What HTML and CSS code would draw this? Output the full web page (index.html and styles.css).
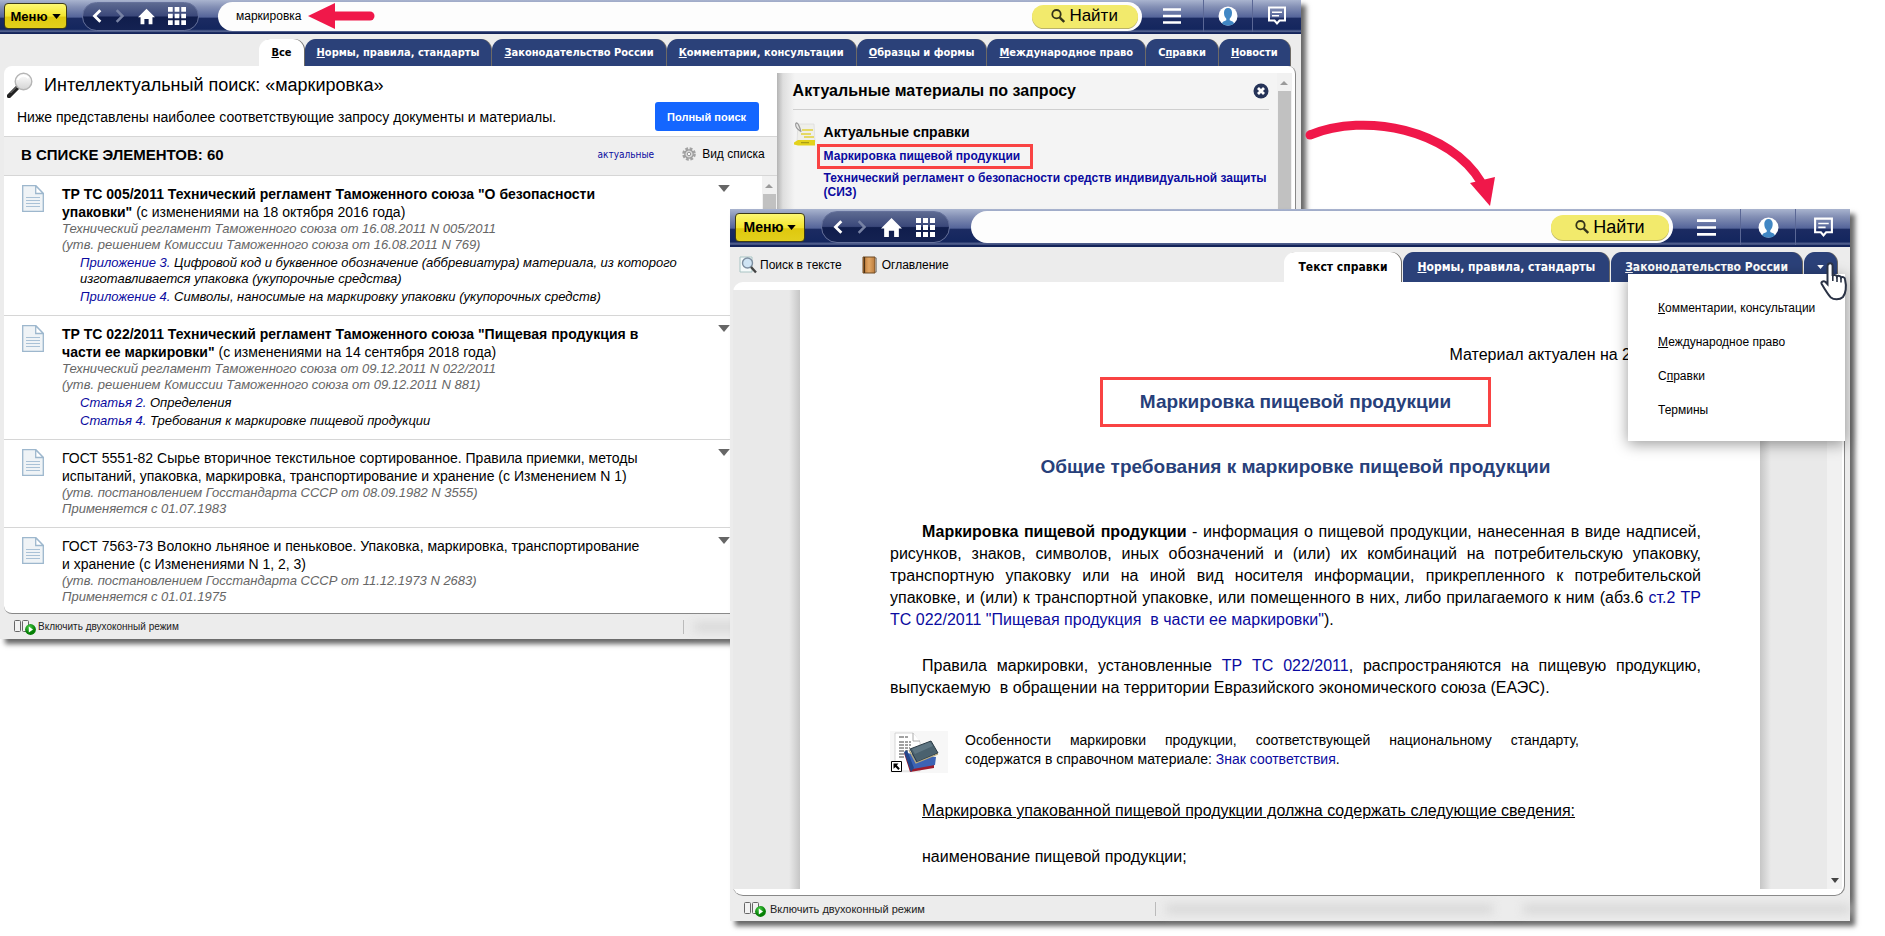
FILE: index.html
```html
<!DOCTYPE html>
<html lang="ru">
<head>
<meta charset="utf-8">
<title>Интеллектуальный поиск</title>
<link rel="stylesheet" href="styles.css">
</head>
<body>
<svg class="sprite" aria-hidden="true">
  <defs>
    <linearGradient id="lens" x1="0" y1="0" x2="0" y2="1"><stop offset="0" stop-color="#fff"/><stop offset="1" stop-color="#d4d4d4"/></linearGradient>
    <linearGradient id="leather" x1="0" y1="0" x2="1" y2="0"><stop offset="0" stop-color="#b97434"/><stop offset="0.5" stop-color="#e2a765"/><stop offset="1" stop-color="#b97a3c"/></linearGradient>
    <radialGradient id="play" cx="0.4" cy="0.3"><stop offset="0" stop-color="#4ad04a"/><stop offset="1" stop-color="#068006"/></radialGradient>
  </defs>
  <symbol id="i-back" viewBox="0 0 12 18"><path d="M10 2 3 9l7 7" fill="none" stroke="currentColor" stroke-width="3.4"/></symbol>
  <symbol id="i-fwd" viewBox="0 0 12 18"><path d="m2 2 7 7-7 7" fill="none" stroke="currentColor" stroke-width="3"/></symbol>
  <symbol id="i-home" viewBox="0 0 20 18"><path d="M10 0 20 10h-3v8h-4.500v-6h-5v6H3v-8H0z" fill="currentColor"/></symbol>
  <symbol id="i-grid" viewBox="0 0 19 19"><path d="M0 0h5v5H0zm7 0h5v5H7zm7 0h5v5h-5zM0 7h5v5H0zm7 0h5v5H7zm7 0h5v5h-5zM0 14h5v5H0zm7 0h5v5H7zm7 0h5v5h-5z" fill="currentColor"/></symbol>
  <symbol id="i-find" viewBox="0 0 14 14"><circle cx="5.500" cy="5.200" r="4.200" fill="none" stroke="#33331a" stroke-width="1.800"/><path d="m8.800 8.600 4.400 4.400" stroke="#33331a" stroke-width="2.400"/></symbol>
  <symbol id="i-list" viewBox="0 0 18 16"><path d="M0 1.500h18M0 8h18M0 14.500h18" stroke="#fff" stroke-width="2.600"/></symbol>
  <symbol id="i-user" viewBox="0 0 20 20"><circle cx="10" cy="10" r="9.500" fill="#fff"/><path d="M4 17.500c.5-2.200 2-2.300 4.300-3.300v-1.500C6.500 11 6 9 6 6.500 6 4 7.500 2 10 2s4 2 4 4.500c0 2.500-.5 4.500-2.300 6.200v1.500c2.300 1 3.800 1.100 4.300 3.300-2 1.600-3.500 2-6 2s-4-.4-6-2z" fill="#4187c4"/></symbol>
  <symbol id="i-chat" viewBox="0 0 20 20"><path d="M2 1.500h16v13h-5.500L10 17.500l-2.500-3H2z" fill="none" stroke="#fff" stroke-width="2"/><path d="M5 6.200h10M5 9.800h7" stroke="#fff" stroke-width="1.600"/></symbol>
  <symbol id="i-doc" viewBox="0 0 22 27"><path d="M.7.700h13l7.600 7.800v17.800H.7z" fill="#eff3f6" stroke="#9db7cd" stroke-width="1.300"/><path d="M13.700.700v7.800h7.600z" fill="#fff" stroke="#9db7cd" stroke-width="1.300"/><path d="M4 12.500h14M4 15.500h14M4 18.500h14M4 21.500h14" stroke="#a9c1d6" stroke-width="1.200"/></symbol>
  <symbol id="i-down" viewBox="0 0 10 6"><path d="M0 0h10L5 6z" fill="currentColor"/></symbol>
  <symbol id="i-up" viewBox="0 0 8 4"><path d="M0 4h8L4 0z" fill="#9a9a9a"/></symbol>
  <symbol id="i-panes" viewBox="0 0 22 16"><rect x=".5" y="1.500" width="6" height="11" rx="1" fill="#f2f2f2" stroke="#666"/><rect x="8.500" y="1.500" width="6" height="11" rx="1" fill="#f2f2f2" stroke="#666"/><circle cx="16.500" cy="10.500" r="5.400" fill="url(#play)"/><path d="m14.800 7.500 4.200 3-4.200 3z" fill="#fff"/></symbol>
</svg>

<main class="desktop">
  <section class="window window-search" aria-label="Результаты поиска">
    <header class="topbar">
      <button class="menu-btn" type="button">Меню <svg><use href="#i-down"/></svg></button>
      <nav class="pill" aria-label="Навигация">
        <button type="button" aria-label="Назад"><svg class="ic-arrow"><use href="#i-back"/></svg></button>
        <button type="button" class="dim" aria-label="Вперёд"><svg class="ic-arrow"><use href="#i-fwd"/></svg></button>
        <button type="button" aria-label="Домой"><svg class="ic-home"><use href="#i-home"/></svg></button>
        <button type="button" aria-label="Разделы"><svg class="ic-grid"><use href="#i-grid"/></svg></button>
      </nav>
      <form class="search">
        <input type="text" value="маркировка" aria-label="Строка поиска">
        <button class="find-btn" type="button"><svg><use href="#i-find"/></svg>Найти</button>
      </form>
      <div class="tools">
        <button type="button" aria-label="Список"><svg class="ic-list"><use href="#i-list"/></svg></button>
        <button type="button" aria-label="Профиль"><svg class="ic-user"><use href="#i-user"/></svg></button>
        <button type="button" aria-label="Сообщения"><svg class="ic-chat"><use href="#i-chat"/></svg></button>
      </div>
    </header>

    <nav class="tabs">
      <a class="tab active" href="#"><u>В</u>се</a>
      <a class="tab" href="#"><u>Н</u>ормы, правила, стандарты</a>
      <a class="tab" href="#"><u>З</u>аконодательство России</a>
      <a class="tab" href="#"><u>К</u>омментарии, консультации</a>
      <a class="tab" href="#"><u>О</u>бразцы и формы</a>
      <a class="tab" href="#"><u>М</u>еждународное право</a>
      <a class="tab" href="#">С<u>п</u>равки</a>
      <a class="tab" href="#"><u>Н</u>овости</a>
    </nav>

    <div class="panel">
      <div class="results">
        <div class="intro">
          <h1><svg class="ic-lens" viewBox="0 0 26 26"><path d="m2 24 8-8" stroke="#222" stroke-width="4.500" stroke-linecap="round"/><path d="m3.500 21 6-6" stroke="#888" stroke-width="1"/><circle cx="16.500" cy="9.500" r="8.300" fill="url(#lens)" stroke="#b5b5b5" stroke-width="1.400"/><path d="M10.500 8a6.500 6.500 0 0 1 11-2" fill="none" stroke="#fff" stroke-width="2"/></svg>Интеллектуальный поиск: «маркировка»</h1>
          <div class="intro-row">
            <p>Ниже представлены наиболее соответствующие запросу документы и материалы.</p>
            <button class="full-btn" type="button">Полный поиск</button>
          </div>
        </div>
        <div class="list-head">
          <h2>В СПИСКЕ ЭЛЕМЕНТОВ: 60</h2>
          <a class="actual" href="#">актуальные</a>
          <button class="view-btn" type="button"><svg viewBox="0 0 14 14"><circle cx="7" cy="7" r="5.600" fill="none" stroke="#a2a2a2" stroke-width="2.400" stroke-dasharray="2.800 1.600"/><circle cx="7" cy="7" r="4.200" fill="#d9d9d9" stroke="#999" stroke-width="1.200"/><circle cx="7" cy="7" r="1.700" fill="#fafafa" stroke="#999"/></svg>Вид списка</button>
        </div>
        <div class="list-wrap">
          <div class="list">
            <article class="item">
              <svg class="ic-doc"><use href="#i-doc"/></svg>
              <div class="item-body">
                <h3><b>ТР ТС 005/2011 Технический регламент Таможенного союза "О безопасности упаковки"</b> (с изменениями на 18 октября 2016 года)</h3>
                <p class="meta">Технический регламент Таможенного союза от 16.08.2011 N 005/2011<br>(утв. решением Комиссии Таможенного союза от 16.08.2011 N 769)</p>
                <p class="part"><a href="#">Приложение 3.</a> Цифровой код и буквенное обозначение (аббревиатура) материала, из которого изготавливается упаковка (укупорочные средства)</p>
                <p class="part"><a href="#">Приложение 4.</a> Символы, наносимые на маркировку упаковки (укупорочных средств)</p>
              </div>
              <button class="more" type="button" aria-label="Действия"><svg><use href="#i-down"/></svg></button>
            </article>
            <article class="item">
              <svg class="ic-doc"><use href="#i-doc"/></svg>
              <div class="item-body">
                <h3><b>ТР ТС 022/2011 Технический регламент Таможенного союза "Пищевая продукция в части ее маркировки"</b> (с изменениями на 14 сентября 2018 года)</h3>
                <p class="meta">Технический регламент Таможенного союза от 09.12.2011 N 022/2011<br>(утв. решением Комиссии Таможенного союза от 09.12.2011 N 881)</p>
                <p class="part"><a href="#">Статья 2.</a> Определения</p>
                <p class="part"><a href="#">Статья 4.</a> Требования к маркировке пищевой продукции</p>
              </div>
              <button class="more" type="button" aria-label="Действия"><svg><use href="#i-down"/></svg></button>
            </article>
            <article class="item">
              <svg class="ic-doc"><use href="#i-doc"/></svg>
              <div class="item-body">
                <h3>ГОСТ 5551-82 Сырье вторичное текстильное сортированное. Правила приемки, методы испытаний, упаковка, маркировка, транспортирование и хранение (с Изменением N 1)</h3>
                <p class="meta">(утв. постановлением Госстандарта СССР от 08.09.1982 N 3555)<br>Применяется с 01.07.1983</p>
              </div>
              <button class="more" type="button" aria-label="Действия"><svg><use href="#i-down"/></svg></button>
            </article>
            <article class="item">
              <svg class="ic-doc"><use href="#i-doc"/></svg>
              <div class="item-body">
                <h3>ГОСТ 7563-73 Волокно льняное и пеньковое. Упаковка, маркировка, транспортирование и&nbsp;хранение (с Изменениями N 1, 2, 3)</h3>
                <p class="meta">(утв. постановлением Госстандарта СССР от 11.12.1973 N 2683)<br>Применяется с 01.01.1975</p>
              </div>
              <button class="more" type="button" aria-label="Действия"><svg><use href="#i-down"/></svg></button>
            </article>
          </div>
          <div class="scroll"><svg><use href="#i-up"/></svg><span class="thumb"></span></div>
        </div>
      </div>
      <aside class="side">
        <div class="side-body">
          <div class="side-head">
            <h2>Актуальные материалы по запросу</h2>
            <button type="button" aria-label="Закрыть"><svg viewBox="0 0 16 16"><circle cx="8" cy="8" r="7.500" fill="#253358"/><path d="m5 5 6 6m0-6-6 6" stroke="#fff" stroke-width="2.800"/></svg></button>
          </div>
          <div class="side-group">
            <svg class="ic-note" viewBox="0 0 24 26"><path d="M5 2h16l1 18H4z" fill="#efefea" stroke="#ddd" stroke-width=".8"/><path d="M9 8h11M8 12h10M11 15h10" stroke="#e2d23a" stroke-width="1.600"/><path d="M3 1c2-1 4 5 5 9M3 1c-1 3 1 6 4 8" fill="none" stroke="#999" stroke-width="1.200"/><path d="M1 20.500 5 18h17v5.500H5L1 22.500z" fill="#e3d21c"/><path d="M8 20.700h8" stroke="#9a8f14"/></svg>
            <div>
              <h3>Актуальные справки</h3>
              <a class="marked" href="#">Маркировка пищевой продукции</a>
              <a href="#">Технический регламент о безопасности средств индивидуальной защиты (СИЗ)</a>
            </div>
          </div>
        </div>
        <div class="scroll"><svg><use href="#i-up"/></svg><span class="thumb"></span></div>
      </aside>
    </div>

    <footer class="status">
      <button type="button"><svg><use href="#i-panes"/></svg>Включить двухоконный режим</button>
      <span class="haze"><i></i></span>
    </footer>
  </section>

  <svg class="arrow-left" viewBox="0 0 68 28" aria-hidden="true"><path d="M25 14h37" stroke="#f0184a" stroke-width="9" stroke-linecap="round"/><path d="M0 14 27 1v26z" fill="#f0184a"/></svg>
  <svg class="arrow-curve" viewBox="0 0 194 90" aria-hidden="true"><path d="M6 15C62-8 146 10 177 62" fill="none" stroke="#f0184a" stroke-width="9"/><circle cx="6" cy="15" r="4.500" fill="#f0184a"/><path d="M166 63 191 57l-5 29z" fill="#f0184a"/></svg>

  <section class="window window-doc" aria-label="Документ">
    <header class="topbar">
      <button class="menu-btn" type="button">Меню <svg><use href="#i-down"/></svg></button>
      <nav class="pill" aria-label="Навигация">
        <button type="button" aria-label="Назад"><svg class="ic-arrow"><use href="#i-back"/></svg></button>
        <button type="button" class="dim" aria-label="Вперёд"><svg class="ic-arrow"><use href="#i-fwd"/></svg></button>
        <button type="button" aria-label="Домой"><svg class="ic-home"><use href="#i-home"/></svg></button>
        <button type="button" aria-label="Разделы"><svg class="ic-grid"><use href="#i-grid"/></svg></button>
      </nav>
      <form class="search">
        <input type="text" aria-label="Строка поиска">
        <button class="find-btn" type="button"><svg><use href="#i-find"/></svg>Найти</button>
      </form>
      <div class="tools">
        <button type="button" aria-label="Список"><svg class="ic-list"><use href="#i-list"/></svg></button>
        <button type="button" aria-label="Профиль"><svg class="ic-user"><use href="#i-user"/></svg></button>
        <button type="button" aria-label="Сообщения"><svg class="ic-chat"><use href="#i-chat"/></svg></button>
      </div>
    </header>

    <div class="doc-bar">
      <button class="tool" type="button"><svg viewBox="0 0 18 18"><path d="M1 1h12v15H1z" fill="#f5fafa" stroke="#a9c4c4"/><circle cx="8.500" cy="7" r="5" fill="#cfe4f4" stroke="#7d8ea0" stroke-width="1.400"/><path d="m12 11 5 5.500" stroke="#444" stroke-width="2.400"/></svg>Поиск в тексте</button>
      <button class="tool" type="button"><svg viewBox="0 0 16 18"><path d="M12 2h2.500v14H12z" fill="#e8e8e8" stroke="#888" stroke-width=".8"/><path d="M1 1h12v16H1z" fill="url(#leather)" stroke="#6e4a24"/><path d="M2.500 1v16" stroke="#4e3314" stroke-width="1.200"/></svg>Оглавление</button>
      <nav class="tabs">
        <a class="tab active" href="#">Текст справки</a>
        <a class="tab" href="#"><u>Н</u>ормы, правила, стандарты</a>
        <a class="tab" href="#"><u>З</u>аконодательство России</a>
        <button class="tab tab-more" type="button" aria-label="Ещё"><svg><use href="#i-down"/></svg></button>
      </nav>
      <div class="popup">
        <a href="#"><u>К</u>омментарии, консультации</a>
        <a href="#"><u>М</u>еждународное право</a>
        <a href="#">С<u>п</u>равки</a>
        <a href="#">Термины</a>
      </div>
      <svg class="hand" viewBox="0 0 30 40" aria-hidden="true"><path d="M10 2.500c2-.8 3.600.3 3.600 2.500v10c.5-1.600 3.900-1.500 4.300.6.900-1.300 3.900-.9 4.200 1 1-1 3.600-.7 3.900 1.600.7 3 1.200 6.500.7 10.400-.3 3-1.200 5-2.700 7.300-3.500 3.200-9 3.200-12.500.3-3-3.400-5.500-7.600-8.800-13.200-1-2 1.600-3.700 3.600-2.200l2.200 2.400V5c0-1.200.5-2 1.500-2.500z" fill="#fff" stroke="#2a3245" stroke-width="2"/><path d="M13.800 14v6M18 15.500V21M22 17v4.500" stroke="#2a3245" stroke-width="1.600"/></svg>
    </div>

    <div class="doc-area">
      <article class="page">
        <p class="fresh">Материал актуален на 2</p>
        <h1>Маркировка пищевой продукции</h1>
        <h2>Общие требования к маркировке пищевой продукции</h2>
        <p class="para"><b>Маркировка пищевой продукции</b> - информация о пищевой продукции, нанесенная в виде надписей, рисунков, знаков, символов, иных обозначений и (или) их комбинаций на потребительскую упаковку, транспортную упаковку или на иной вид носителя информации, прикрепленного к потребительской упаковке, и (или) к транспортной упаковке, или помещенного в них, либо прилагаемого к ним (абз.6 <a href="#">ст.2 ТР ТС 022/2011 "Пищевая продукция&nbsp; в части ее маркировки"</a>).</p>
        <p class="para">Правила маркировки, установленные <a href="#">ТР ТС 022/2011</a>, распространяются на пищевую продукцию, выпускаемую&nbsp; в обращении на территории Евразийского экономического союза (ЕАЭС).</p>
        <div class="note">
          <svg viewBox="0 0 58 42"><path d="M0 0h58v42H0z" fill="#f7f7f7"/><path d="M5 2h18l7 9v29H5z" fill="#fff" stroke="#ccc" stroke-width=".8"/><path d="M23 2v8h7" fill="#fff" stroke="#aaa"/><path d="M9 6h9M9 11h12M9 14h12M9 17h11M9 20h9M9 23h8M9 26h6" stroke="#444" stroke-dasharray="5 1 3 1"/><path d="m14 22 6 19 24-4v-6z" fill="#9c1c2c"/><path d="m16 22 7 16 22-4 1-8z" fill="#3c63b4"/><path d="m14 21 3-2 7 18-3 4z" fill="#24468a"/><path d="m20 18 21-8 7 12-21 9z" fill="#4a616e" stroke="#2c3b45"/><path d="m19 19 7 13 22-9" fill="none" stroke="#b8ab7b" stroke-width="1.300"/><path d="m22 18 18-7 3 4-18 8z" fill="#5f7683"/><path d="M1.500 30.500h10v10h-10z" fill="#fff" stroke="#000"/><path d="M3.500 32.500h5l-1.700 1.700 3 3.300-1.500 1.500-2.800-3-2 1.800z" fill="#000"/></svg>
          <p>Особенности маркировки продукции, соответствующей национальному стандарту, содержатся в справочном материале: <a href="#">Знак соответствия</a>.</p>
        </div>
        <p class="para"><span class="lined">Маркировка упакованной пищевой продукции должна содержать следующие сведения:</span></p>
        <p class="para">наименование пищевой продукции;</p>
      </article>
      <div class="scroll"><svg><use href="#i-down"/></svg></div>
    </div>

    <footer class="status">
      <button type="button"><svg><use href="#i-panes"/></svg>Включить двухоконный режим</button>
      <span class="haze"><i></i><i></i></span>
    </footer>
  </section>
</main>
</body>
</html>
```

FILE: styles.css
```css
* { box-sizing: border-box; }

body {
  margin: 0;
  background: #fff;
  color: #000;
  font-family: "Liberation Sans", Arial, sans-serif;
}

h1, h2, h3, p { margin: 0; }
a { color: #0a0aa0; text-decoration: none; }

button {
  margin: 0;
  padding: 0;
  border: 0;
  background: none;
  color: inherit;
  font: inherit;
}

svg { display: block; flex: none; }
.sprite { position: absolute; width: 0; height: 0; }

.desktop {
  position: relative;
  min-height: 100vh;
  overflow: hidden;
}

.window {
  position: absolute;
  background: #ececec;
  box-shadow: 5px 5px 5px rgba(0, 0, 0, .6);
}

.window-search { left: 0; top: 0; width: 69%; }
.window-doc { left: 730px; right: 35px; top: 209px; }

/* Top bar */
.topbar {
  display: flex;
  align-items: center;
  height: 34px;
  padding: 0 0 2px 4px;
  background: linear-gradient(#a9b4cf 0, #8490b5 20%, #55659a 50%, #1b2b62 54%, #14265e 86%, #5c6a96 92%, #14245a 96%);
}

.menu-btn {
  display: flex;
  align-items: center;
  justify-content: center;
  gap: 4px;
  width: 63px;
  height: 26px;
  border: 1px solid #3d3a16;
  border-radius: 4px;
  background: linear-gradient(#fdf873, #f3e52f 50%, #dfc80e 55%, #e2cf1c);
  font-size: 13px;
  font-weight: bold;
}
.menu-btn svg { width: 9px; height: 5px; }

.pill {
  display: flex;
  align-items: center;
  height: 29px;
  margin-left: 15px;
  padding: 0 12px 0 9px;
  gap: 13px;
  border: 1px solid #65719b;
  border-radius: 15px;
  background: linear-gradient(#5d6a91, #3b487a 48%, #101d4c 52%, #142252);
  color: #fff;
}
.pill .dim { color: #7782a4; }
.ic-arrow { width: 10px; height: 16px; }
.ic-home { width: 17px; height: 17px; }
.ic-grid { width: 18px; height: 18px; }

.search {
  display: flex;
  flex: 1;
  align-items: center;
  height: 29px;
  margin-left: 19px;
  padding: 0 4px 0 18px;
  border-radius: 15px;
  background: #fdfdfd;
}
.search input {
  flex: 1;
  min-width: 0;
  padding: 0;
  border: 0;
  outline: 0;
  background: none;
  font: 12px "Liberation Sans", Arial, sans-serif;
}
.find-btn {
  display: flex;
  align-items: center;
  justify-content: center;
  gap: 4px;
  width: 106px;
  height: 23px;
  border-radius: 12px;
  background: #f2ea6c;
  box-shadow: 0 1px 0 #b9b26a;
  font-size: 17px;
}
.find-btn svg { width: 14px; height: 14px; }

.tools { display: flex; }
.tools button {
  display: flex;
  align-items: center;
  justify-content: center;
  width: 49px;
  height: 32px;
}
.tools button:first-child { width: 61px; }
.tools button + button { border-left: 1px solid #5a6795; }
.ic-list { width: 18px; height: 16px; }
.ic-user, .ic-chat { width: 20px; height: 20px; }

/* Tabs */
.tabs {
  display: flex;
  justify-content: flex-end;
  gap: 2px;
  font: bold 11px "DejaVu Sans Condensed", "DejaVu Sans", sans-serif;
}
.window-search .tabs { gap: 1px; padding: 5px 11px 0 0; }
.tab {
  display: flex;
  align-items: center;
  height: 27px;
  padding: 0 12px;
  border-radius: 11px 11px 0 0;
  background: #2b4179;
  box-shadow: 1px 0 0 #6d6a66;
  color: #fff;
  white-space: nowrap;
}
.tab.active { background: #fff; color: #000; }

/* Search results */
.panel {
  display: flex;
  margin: 0 5px 0 4px;
  padding-right: 3px;
  border-right: 1px solid #888;
  border-bottom: 1px solid #888;
  border-radius: 8px;
  background: #fff;
}
.results { flex: 3 1 0; min-width: 0; }
.intro { height: 70px; padding: 7px 18px 0 13px; }
.intro h1 {
  display: flex;
  align-items: center;
  gap: 11px;
  height: 24px;
  margin-left: -10px;
  font-size: 18px;
  font-weight: normal;
}
.ic-lens { width: 26px; height: 26px; }
.intro-row { display: flex; align-items: center; justify-content: space-between; margin-top: 5px; }
.intro-row p { font-size: 14px; }
.full-btn {
  width: 104px;
  height: 29px;
  border-radius: 3px;
  background: #1466ff;
  color: #fff;
  font-size: 11px;
  font-weight: bold;
}
.list-head {
  display: flex;
  align-items: center;
  height: 40px;
  padding: 0 12px 4px 17px;
  border: solid #d6d6d6;
  border-width: 1px 0;
  background: #efefef;
}
.list-head h2 { flex: 1; font-size: 15px; }
.actual { font: 10px "DejaVu Sans Condensed", "DejaVu Sans", sans-serif; }
.view-btn { display: flex; align-items: center; gap: 6px; margin-left: 28px; font-size: 12px; }
.view-btn svg { width: 14px; height: 14px; }

.list-wrap { display: flex; }
.list { flex: 1; min-width: 0; }
.item {
  display: flex;
  align-items: flex-start;
  padding: 9px 32px 10px 18px;
  border-bottom: 1px solid #d6d6d6;
}
.item:last-child { padding-bottom: 8px; border-bottom: 0; }
.ic-doc { width: 22px; height: 27px; margin-right: 18px; }
.item-body { flex: 1; min-width: 0; padding-right: 32px; }
.item h3 { padding-right: 24px; font-size: 14px; line-height: 18px; font-weight: normal; }
.meta { color: #666; font-size: 13px; line-height: 16px; font-style: italic; }
.part { margin-top: 2px; padding-left: 18px; font-size: 13px; line-height: 16px; font-style: italic; }
.more { color: #666; }
.more svg { width: 12px; height: 7px; }

.scroll {
  display: flex;
  flex-direction: column;
  align-items: center;
  width: 15px;
  padding-top: 8px;
  background: #f1f1f1;
}
.scroll svg { width: 8px; height: 4px; }
.thumb { flex: 1; width: 13px; margin-top: 6px; background: #c1c1c1; }

/* Side panel */
.side {
  display: flex;
  flex: 2 1 0;
  min-width: 0;
  margin-top: 7px;
  background: linear-gradient(to right, #b4b4b4, #dedede 6px, #f4f4f4 18px);
}
.side-body { flex: 1; padding: 0 8px 0 16px; }
.side-head {
  display: flex;
  align-items: center;
  justify-content: space-between;
  height: 37px;
  border-bottom: 1px solid #cfcfcf;
}
.side-head h2 { font-size: 16px; }
.side-head svg { width: 16px; height: 16px; }
.side-group { display: flex; margin-top: 12px; gap: 7px; }
.ic-note { width: 24px; height: 26px; }
.side-group h3 { font-size: 14px; line-height: 20px; }
.side-group a { display: block; font-size: 12px; line-height: 14px; font-weight: bold; }
.side-group a.marked {
  width: fit-content;
  margin: 2px 0 2px -7px;
  padding: 3px 10px 4px 4px;
  border: 3px solid #f94343;
  line-height: 12px;
}

/* Callout arrows over the windows */
.arrow-left { position: absolute; left: 308px; top: 2px; width: 68px; height: 28px; }
.arrow-curve { position: absolute; left: 1304px; top: 120px; width: 194px; height: 90px; }

/* Status bar */
.status { display: flex; align-items: center; height: 25px; padding-left: 14px; font-size: 11px; color: #222; }
.status button { display: flex; align-items: center; gap: 4px; }
.status svg { width: 22px; height: 16px; }
.haze { display: flex; gap: 30px; height: 14px; border-left: 1px solid #bbb; padding: 2px 0 0 10px; }
.haze i { flex: 1; height: 10px; background: #d9d9d9; filter: blur(5px); }
.window-search .status { justify-content: space-between; font-size: 10px; }
.window-search .status button { gap: 2px; }
.window-search .haze { width: 48%; padding-right: 20px; }

/* Document window */
.window-doc .topbar { height: 38px; padding-left: 5px; }
.window-doc .menu-btn { width: 70px; height: 29px; font-size: 14px; }
.window-doc .pill { height: 32px; margin-left: 16px; padding: 0 14px 0 11px; gap: 14px; border-radius: 16px; }
.window-doc .ic-home { width: 21px; height: 19px; }
.window-doc .ic-grid { width: 19px; height: 19px; }
.window-doc .search { height: 32px; margin-left: 21px; border-radius: 16px; }
.window-doc .find-btn { width: 118px; height: 25px; font-size: 18px; }
.window-doc .tools button { width: 55px; height: 36px; }
.window-doc .tools button:first-child { width: 67px; }
.window-doc .ic-list { width: 19px; height: 17px; }
.window-doc .ic-user, .window-doc .ic-chat { width: 21px; height: 21px; }

.doc-bar { position: relative; display: flex; align-items: center; height: 35px; padding-left: 9px; }
.tool { display: flex; align-items: center; gap: 3px; margin-right: 19px; font-size: 12px; }
.tool svg { width: 18px; height: 18px; }
.doc-bar .tabs { flex: 1; align-self: flex-end; padding-right: 13px; font-size: 12px; }
.doc-bar .tab { height: 30px; padding: 0 14px; }
.doc-bar .tab-more { padding: 0 13px; }
.tab-more svg { width: 7px; height: 4px; }

.popup {
  position: absolute;
  top: 27px;
  right: 5px;
  z-index: 1;
  display: flex;
  flex-direction: column;
  width: 217px;
  padding: 17px 0 14px 30px;
  background: #fff;
  box-shadow: 0 3px 14px rgba(0, 0, 0, .4);
}
.popup a { color: #000; font-size: 12px; line-height: 34px; }
.hand { position: absolute; top: 14px; right: 1px; z-index: 2; width: 30px; height: 40px; }

.doc-area {
  display: flex;
  margin: 0 5px 0 3px;
  padding: 8px 2px 6px 0;
  border-right: 1px solid #888;
  border-bottom: 1px solid #888;
  border-radius: 10px;
  background: #fff;
}
.page {
  flex: 1;
  padding: 54px 59px 21px 90px;
  border: solid transparent;
  border-width: 0 67px;
  background:
    linear-gradient(#fff, #fff) padding-box,
    linear-gradient(to right, #e9e9e9 56px, #c6c6c6 67px, #c6c6c6 calc(100% - 67px), #e9e9e9 calc(100% - 56px)) border-box;
  font-size: 16px;
  line-height: 22px;
}
.fresh { padding-right: 70px; text-align: right; }
.page h1, .page h2 { color: #27407a; font-size: 19px; text-align: center; }
.page h1 {
  width: fit-content;
  margin: 11px auto 0;
  padding: 12px 37px;
  border: 3px solid #f94343;
  line-height: 20px;
}
.page h2 { margin-top: 29px; }
.page h2 + .para { margin-top: 43px; }
.para { margin-top: 24px; text-align: justify; text-indent: 32px; }
.note { display: flex; gap: 17px; margin: 32px 122px 0 0; font-size: 14px; line-height: 19px; }
.note svg { width: 58px; height: 42px; }
.note p { text-align: justify; }
.lined { text-decoration: underline; }
.note + .para { margin-top: 27px; }
.doc-area .scroll { justify-content: flex-end; padding-bottom: 6px; color: #444; }
.doc-area .scroll svg { height: 5px; }
.window-doc .haze { flex: 1; margin-left: 230px; }
```
